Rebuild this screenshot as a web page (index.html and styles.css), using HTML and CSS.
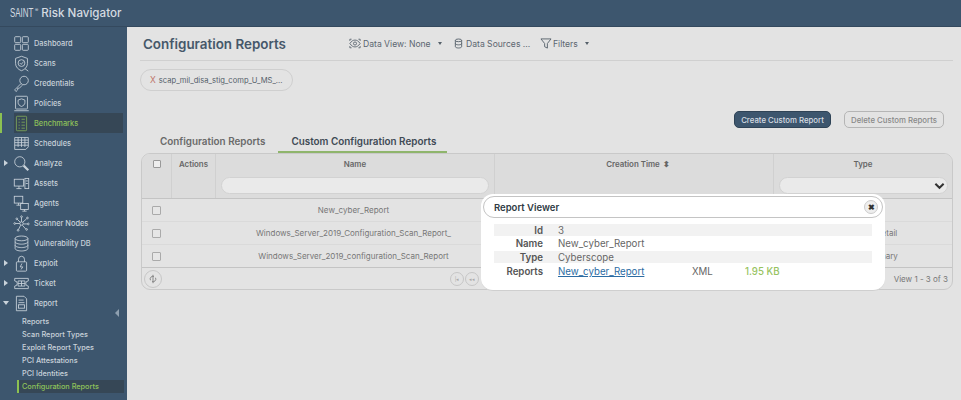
FILE: index.html
```html
<!DOCTYPE html>
<html lang="en">
<head>
<meta charset="utf-8">
<title>Configuration Reports</title>
<link rel="stylesheet" href="styles.css">
</head>
<body>
<header class="topbar">
  <span class="logo">SAINT</span><span class="logo-reg">®</span><span class="product">Risk Navigator</span>
</header>
<div class="shell">
  <nav class="sidebar">
    <a class="nav-item"><span class="caret"></span><svg class="ico" viewBox="0 0 20 20"><rect x="2" y="2" width="7" height="7" rx="1"/><rect x="11" y="2" width="7" height="7" rx="1"/><rect x="2" y="11" width="7" height="7" rx="1"/><rect x="11" y="11" width="7" height="7" rx="1"/></svg><span>Dashboard</span></a>
    <a class="nav-item"><span class="caret"></span><svg class="ico" viewBox="0 0 20 20"><path d="M10 1.500 17 4v6c0 4-3 7-7 8.500-4-1.500-7-4.500-7-8.500V4z"/><circle cx="10" cy="9.500" r="4"/><path d="m8 9.500 1.500 1.500 3-3M14 16l4 3"/></svg><span>Scans</span></a>
    <a class="nav-item"><span class="caret"></span><svg class="ico" viewBox="0 0 20 20"><circle cx="13" cy="6.500" r="5"/><path d="M9.500 10 2 17.500 3.500 19.500 5.500 17.500 5.500 15.500 7.500 15.500 11 12"/></svg><span>Credentials</span></a>
    <a class="nav-item"><span class="caret"></span><svg class="ico" viewBox="0 0 20 20"><rect x="3" y="1.500" width="14" height="15" rx="1"/><path d="M10 4.500l4 1.500v3c0 2-1.500 3.500-4 4.500-2.500-1-4-2.500-4-4.500V6zM1.500 18.500h17"/></svg><span>Policies</span></a>
    <a class="nav-item nav-active"><span class="caret"></span><svg class="ico" viewBox="0 0 20 20"><rect x="4" y="1.500" width="12" height="17" rx="1"/><path d="M6.500 5h1.500M10 5h4M6.500 8.500h1.500M10 8.500h4M6.500 12h1.500M10 12h4M6.500 15.500h1.500M10 15.500h4"/></svg><span>Benchmarks</span></a>
    <a class="nav-item"><span class="caret"></span><svg class="ico" viewBox="0 0 20 20"><path d="M2 3h16v11l-3 3H2zM2 6h16M2 9h16M2 12h16M6 3v11M10 3v11M14 3v11"/></svg><span>Schedules</span></a>
    <a class="nav-item"><span class="caret caret-right"></span><svg class="ico" viewBox="0 0 20 20"><circle cx="8" cy="8" r="6"/><path d="m12.500 12.500 5.500 5.500" class="thick"/></svg><span>Analyze</span></a>
    <a class="nav-item"><span class="caret"></span><svg class="ico" viewBox="0 0 20 20"><rect x="1.500" y="5" width="11" height="8"/><path d="M7 13v3M4 16h6"/><rect x="14" y="4" width="4.500" height="12"/><path d="M15 7h2.500M15 10h2.500"/></svg><span>Assets</span></a>
    <a class="nav-item"><span class="caret"></span><svg class="ico" viewBox="0 0 20 20"><rect x="1.500" y="1.500" width="10" height="8"/><path d="M6.500 9.500V12M4 12h5"/><rect x="9" y="10" width="9" height="7"/><path d="M13.500 17v2M11 19h5"/></svg><span>Agents</span></a>
    <a class="nav-item"><span class="caret"></span><svg class="ico" viewBox="0 0 20 20"><circle cx="10" cy="10" r="2"/><path d="M10 8V3M11.500 8.500 16 4.500M12 10.500h5M11 12l4 4.500M9 12l-2.500 5M8 10H3M8.500 8.500 5 5"/><circle cx="10" cy="2" r="1"/><circle cx="17" cy="3.500" r="1"/><circle cx="18" cy="10.500" r="1"/><circle cx="16" cy="17" r="1"/><circle cx="6" cy="18" r="1"/><circle cx="2" cy="10" r="1"/><circle cx="4.500" cy="4.500" r="1"/></svg><span>Scanner Nodes</span></a>
    <a class="nav-item"><span class="caret"></span><svg class="ico" viewBox="0 0 20 20"><ellipse cx="10" cy="4" rx="7.500" ry="2.800"/><path d="M2.500 4v12c0 1.500 3.500 2.800 7.500 2.800s7.500-1.300 7.500-2.800V4M2.500 8c0 1.500 3.500 2.800 7.500 2.800s7.500-1.300 7.500-2.800M2.500 12c0 1.500 3.500 2.800 7.500 2.800s7.500-1.300 7.500-2.800"/></svg><span>Vulnerability DB</span></a>
    <a class="nav-item"><span class="caret caret-right"></span><svg class="ico" viewBox="0 0 20 20"><rect x="4" y="8" width="12" height="11" rx="1"/><path d="M6.500 8V5a3.500 3.500 0 0 1 7 0v3M10.500 10l-2 4h3l-2 3"/></svg><span>Exploit</span></a>
    <a class="nav-item"><span class="caret caret-right"></span><svg class="ico" viewBox="0 0 20 20"><path d="M2 4h16v3a3 3 0 0 0 0 6v3H2v-3a3 3 0 0 0 0-6z"/><path d="M6 7h8v6H6zM6 10h8M10 7v6"/></svg><span>Ticket</span></a>
    <a class="nav-item"><span class="caret caret-down"></span><svg class="ico" viewBox="0 0 20 20"><path d="M4 1.500h9l3 3v14H4z"/><path d="M6.500 6h6M6.500 9h7"/><rect x="6.500" y="11.500" width="7" height="4"/></svg><span>Report</span></a>
    <ul class="subnav">
      <li>Reports</li>
      <li>Scan Report Types</li>
      <li>Exploit Report Types</li>
      <li>PCI Attestations</li>
      <li>PCI Identities</li>
      <li class="sub-active">Configuration Reports</li>
    </ul>
    <span class="collapse"></span>
  </nav>

  <main class="content">
    <div class="page-head">
      <h1>Configuration Reports</h1>
      <div class="tools">
        <span class="tool tool-view"><svg class="tool-ico tool-eye" viewBox="0 0 14 12"><path d="M1 6c2-3 4-4 6-4s4 1 6 4c-2 3-4 4-6 4S3 9 1 6z"/><circle cx="7" cy="6" r="1.800"/><path d="M1 3V1h2M11 1h2v2M13 9v2h-2M3 11H1V9"/></svg>Data View: None<i class="drop"></i></span>
        <span class="tool tool-src"><svg class="tool-ico tool-db" viewBox="0 0 10 12"><ellipse cx="5" cy="2.500" rx="3.500" ry="1.500"/><path d="M1.500 2.500v7c0 .8 1.500 1.500 3.500 1.500s3.500-.7 3.500-1.500v-7M1.500 6c0 .8 1.500 1.500 3.500 1.500S8.500 6.800 8.500 6"/></svg>Data Sources ...</span>
        <span class="tool"><svg class="tool-ico tool-funnel" viewBox="0 0 12 12"><path d="M.5 1h11L7.500 6v5l-3-1.500V6z"/></svg>Filters<i class="drop"></i></span>
      </div>
    </div>

    <div class="chip-row"><span class="chip"><b>X</b>scap_mil_disa_stig_comp_U_MS_...</span></div>

    <div class="actions">
      <button class="btn btn-primary">Create Custom Report</button>
      <button class="btn btn-muted">Delete Custom Reports</button>
    </div>

    <div class="tabs">
      <span class="tab">Configuration Reports</span>
      <span class="tab tab-on">Custom Configuration Reports</span>
    </div>

    <div class="grid">
      <div class="grid-head">
        <div class="hc hc-check"><span class="box"></span></div>
        <div class="hc hc-actions">Actions</div>
        <div class="hc hc-fill">Name<span class="filter"></span></div>
        <div class="hc hc-fill hc-time">Creation Time <span class="sort">⬍</span></div>
        <div class="hc hc-type">Type<span class="filter filter-select"><svg viewBox="0 0 12 8"><path d="m1.500 1.500 4.500 4.500 4.500-4.500"/></svg></span></div>
      </div>
      <div class="row">
        <div class="c-check"><span class="box"></span></div><div class="c-name">New_cyber_Report</div><div class="c-time"></div><div class="c-type"></div>
      </div>
      <div class="row">
        <div class="c-check"><span class="box"></span></div><div class="c-name">Windows_Server_2019_Configuration_Scan_Report_</div><div class="c-time"></div><div class="c-type">Compliance Detail</div>
      </div>
      <div class="row">
        <div class="c-check"><span class="box"></span></div><div class="c-name">Windows_Server_2019_configuration_Scan_Report</div><div class="c-time"></div><div class="c-type">Security Summary</div>
      </div>
      <div class="pager">
        <span class="round"><svg viewBox="0 0 12 12"><path d="M3 7.500a3.200 3.200 0 0 1 4-4.500M9 4.500a3.200 3.200 0 0 1-4 4.500M6 1v10"/></svg></span>
        <span class="pager-nav"><span class="round round-sm">|◂</span><span class="round round-sm">◂◂</span></span>
        <span class="view">View 1 - 3 of 3</span>
      </div>
    </div>

    <section class="modal">
      <div class="modal-title"><span>Report Viewer</span><span class="close">✖</span></div>
      <div class="modal-body">
        <div class="kv kv-alt"><b>Id</b><span>3</span></div>
        <div class="kv kv-name"><b>Name</b><span>New_cyber_Report</span></div>
        <div class="kv kv-alt"><b>Type</b><span>Cyberscope</span></div>
        <div class="kv kv-report"><b>Reports</b><a>New_cyber_Report</a><span class="fmt">XML</span><span class="size">1.95 KB</span></div>
      </div>
    </section>
  </main>
</div>
</body>
</html>
```
FILE: styles.css
```css
* { box-sizing: border-box; }
html, body { margin: 0; height: 100%; overflow: hidden; }
body { font-family: Inter, "Liberation Sans", sans-serif; background: #e3e3e3; color: #555; }

.topbar { height: 27px; background: #3d566e; display: flex; align-items: center; padding-left: 10px; color: #d5dbe1; border-bottom: 1px solid #34495e; }
.logo { display: inline-block; width: 25px; font-family: "Liberation Sans", sans-serif; font-size: 12px; font-weight: 400; transform: scaleX(.66); transform-origin: left center; white-space: nowrap; }
.logo-reg { font-size: 5px; margin: -7px 3px 0 0; }
.product { font-size: 11.600px; font-weight: 500; }

.shell { display: flex; height: 373px; }
.sidebar { position: relative; width: 127px; flex: none; background: #3d566e; padding-top: 6px; }
.nav-item { display: flex; align-items: center; height: 20px; font-size: 7.400px; font-weight: 500; color: #c9d2da; white-space: nowrap; }
.caret { width: 13px; flex: none; display: flex; }
.caret-right::before { content: ""; margin-left: 4px; border-left: 4px solid #c9d2da; border-top: 3px solid transparent; border-bottom: 3px solid transparent; }
.caret-down::before { content: ""; margin-left: 3px; border-top: 4px solid #c9d2da; border-left: 3px solid transparent; border-right: 3px solid transparent; }
.ico { width: 17px; height: 17px; flex: none; margin-right: 4px; fill: none; stroke: #c9d2da; stroke-width: 1; }
.thick { stroke-width: 2.500; }
.nav-active { color: #8fc25a; background: linear-gradient(90deg, #3d566e 14px, #364756 14px, #364756 123px, #3d566e 123px); box-shadow: inset 2px 0 0 #8cc152; }
.nav-active .ico { stroke: #7ea65a; }
.subnav { list-style: none; margin: 2px 0 0; padding: 0 0 0 22px; font-size: 7.300px; font-weight: 500; color: #c9d2da; }
.subnav li { height: 13px; line-height: 13px; white-space: nowrap; }
.sub-active { margin-left: -5px; padding-left: 3px; margin-right: 3px; border-left: 2px solid #8cc152; background: #364756; color: #8fc25a; }
.collapse { position: absolute; right: 8px; top: 282px; border-right: 4px solid #8fa0b0; border-top: 4px solid transparent; border-bottom: 4px solid transparent; }

.content { position: relative; flex: 1; padding: 0 8px 0 14px; }
.page-head { display: flex; align-items: center; height: 34px; margin-left: -1px; border-bottom: 1px solid #d0d0d0; }
.page-head h1 { margin: 0 0 0 3px; width: 206px; font-size: 13.400px; font-weight: 600; color: #46586a; white-space: nowrap; }
.tools { display: flex; font-size: 8.600px; color: #5c6670; }
.tool { display: flex; align-items: center; white-space: nowrap; }
.tool-view { width: 105px; }
.tool-src { width: 86px; }
.tool-ico { width: 12px; height: 11px; margin-right: 2px; fill: none; stroke: #55606a; stroke-width: 1; }
.tool-db { width: 9px; margin-right: 3px; }
.tool-funnel { margin-right: 1px; }
.drop { margin-left: 7px; border-top: 3px solid #55606a; border-left: 2.500px solid transparent; border-right: 2.500px solid transparent; }

.chip-row { padding-top: 6px; height: 50px; margin-left: -1px; }
.chip { display: inline-flex; align-items: center; width: 153px; height: 22px; padding-left: 9px; border: 1px solid #cfcfcf; border-radius: 11px; font-size: 7.600px; color: #55606a; white-space: nowrap; }
.chip b { font-weight: 400; color: #c0756a; font-size: 8.500px; margin-right: 3px; }

.actions { display: flex; justify-content: flex-end; gap: 13px; padding-right: 9px; height: 20px; }
.btn { height: 17px; padding: 0; font-family: inherit; font-size: 7.800px; font-weight: 500; border-radius: 5px; }
.btn-primary { width: 97px; background: #3d566e; color: #d7dde3; border: 1px solid #2f4356; }
.btn-muted { width: 100px; background: #e3e3e3; color: #888; border: 1px solid #b5b5b5; }

.tabs { display: flex; height: 22px; padding-left: 6px; font-size: 9.900px; font-weight: 600; color: #6a6a6a; }
.tab { padding: 0 13px; line-height: 20px; white-space: nowrap; }
.tab-on { color: #3f4a55; width: 169px; border-bottom: 2px solid #8fb56c; }

.grid { width: 812px; height: 137px; border: 1px solid #c9c9c9; border-radius: 9px; overflow: hidden; }
.grid-head { display: flex; height: 45px; background: #dcdcdc; border-bottom: 1px solid #c4c4c4; }
.hc { display: flex; flex-direction: column; align-items: center; padding-top: 5px; font-size: 7.900px; font-weight: 600; color: #666; border-right: 1px solid #d0d0d0; white-space: nowrap; }
.hc-check { width: 30px; }
.hc-actions { width: 44px; }
.hc-fill { width: 279px; }
.hc-type { flex: 1; border-right: 0; }
.hc-time { flex-direction: row; justify-content: center; align-items: flex-start; padding-left: 8px; white-space: pre; }
.box { display: block; width: 8px; height: 8px; margin-top: 1px; border: 1px solid #999; background: #eee; border-radius: 1px; }
.sort { font-size: 8px; margin-left: 1px; }
.filter { display: flex; align-items: center; justify-content: flex-end; width: 268px; height: 17px; margin-top: 8px; background: #eaeaea; border: 1px solid #d2d2d2; border-radius: 9px; }
.filter-select { width: 169px; padding-right: 2px; }
.filter-select svg { width: 11px; height: 8px; fill: none; stroke: #333; stroke-width: 2.200; }

.row { display: flex; height: 23px; align-items: center; font-size: 8px; color: #777; border-bottom: 1px solid #dadada; }
.row .box { margin: 0; width: 9px; height: 9px; border-color: #aaa; background: #e6e6e6; }
.c-check { width: 72px; padding-left: 10px; }
.c-name { width: 279px; text-align: center; white-space: nowrap; }
.c-time { width: 281px; }
.c-type { flex: 1; text-align: center; white-space: nowrap; }

.pager { position: relative; display: flex; align-items: center; justify-content: space-between; height: 22px; padding: 0 4px 0 2px; border-top: 1px solid #c4c4c4; margin-top: -1px; font-size: 8px; color: #777; }
.round { display: inline-flex; align-items: center; justify-content: center; width: 18px; height: 18px; border: 1px solid #c6c6c6; border-radius: 50%; }
.round svg { width: 10px; height: 10px; fill: none; stroke: #777; stroke-width: 1; }
.pager-nav { position: absolute; left: 308px; display: flex; gap: 1px; }
.round-sm { width: 14px; height: 14px; font-size: 5px; color: #aaa; }

.modal { position: absolute; left: 354px; top: 167px; width: 404px; height: 97px; padding: 2px; background: #fff; border-radius: 12px; border-bottom: 1px solid #cfcfcf; }
.modal-title { display: flex; align-items: center; justify-content: space-between; height: 22px; padding: 0 4px 0 10px; border: 1px solid #c4c4c4; border-radius: 11px; font-size: 9.500px; font-weight: 600; color: #2f3a44; }
.close { display: flex; align-items: center; justify-content: center; width: 14px; height: 14px; border: 1px solid #ccc; border-radius: 50%; background: #eee; font-size: 8px; color: #333; }
.modal-body { padding: 6px 11px 0 11px; }
.kv { display: flex; align-items: center; font-size: 9.700px; color: #666; }
.kv-alt { background: #f2f2f2; height: 12px; }
.kv-name { height: 15px; }
.kv b { width: 49px; text-align: right; margin-right: 15px; font-weight: 600; color: #555; }
.kv-report { height: 17px; }
.kv-report a { width: 134px; color: #2c6ca3; text-decoration: underline; }
.fmt { width: 53px; }
.size { color: #97c35f; font-weight: 500; }
.view { white-space: nowrap; }
```
